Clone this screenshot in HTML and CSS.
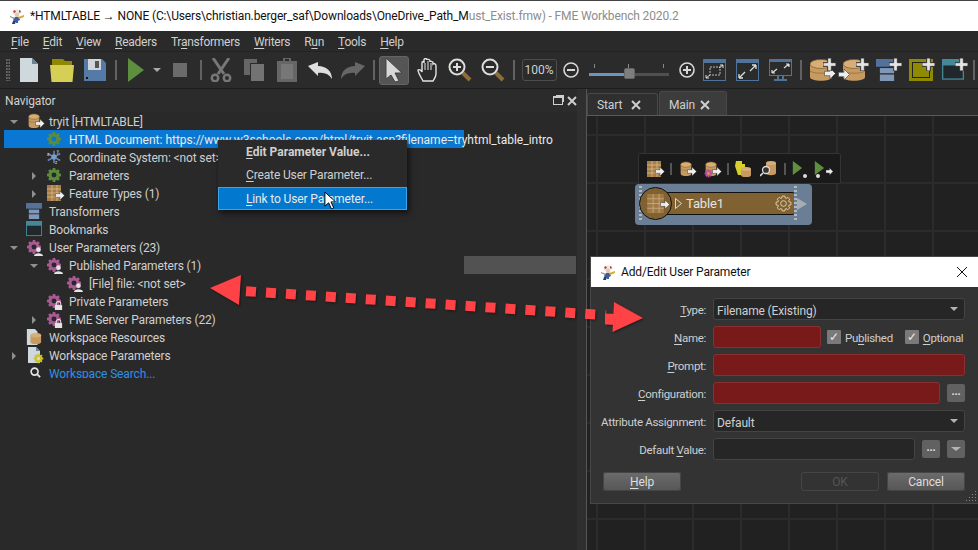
FILE: index.html
```html
<!DOCTYPE html>
<html lang="en">
<head>
<meta charset="utf-8">
<title>FME Workbench 2020.2</title>
<link rel="stylesheet" href="styles.css">
</head>
<body>
<svg class="defs" width="0" height="0">
  <defs>
    <symbol id="wizard" viewBox="0 0 16 16">
      <path d="M3 5 L8 1 L13 4 L11 6 L5 7Z" fill="#e8e8e8"/><path d="M4 3l2-1 1 2-2 1z" fill="#c83c2c"/><path d="M10 2l2 1-1 2-1-1z" fill="#c83c2c"/>
      <circle cx="8" cy="7" r="2.2" fill="#e8c8a8"/><path d="M6 9h4l1 3-2 1v2H7v-2l-2 1-1-2z" fill="#3c5ca8"/><path d="M1 8l5 2-1 1-4-2z" fill="#888"/><path d="M9 9l6-2 0 2-5 2z" fill="#d0b040"/><path d="M4 13l3 0-1 3H3z" fill="#2c3c70"/>
    </symbol>
    <symbol id="doc" viewBox="0 0 18 24"><path d="M0 0H12L18 6V24H0Z" fill="#cfd8dc"/><path d="M12 0L18 6H12Z" fill="#6d8592"/></symbol>
    <symbol id="folder" viewBox="0 0 24 23"><path d="M2 0H13L15 2H22V8H2Z" fill="#8e8900"/><path d="M0 6H24L22.500 23H1.500Z" fill="#d6cf55"/></symbol>
    <symbol id="save" viewBox="0 0 22 22"><path d="M0 0H18L22 4V22H0Z" fill="#567aa6"/><path d="M4 0H17V11H4Z" fill="#cfd5da"/><path d="M11 2H15V9H11Z" fill="#555"/><rect x="2" y="18" width="2" height="2" fill="#111"/></symbol>
    <symbol id="play" viewBox="0 0 16 24"><path d="M0 0L16 12L0 24Z" fill="#5d8f3e"/></symbol>
    <symbol id="scissors" viewBox="0 0 22 24"><path d="M3 0L14 16M19 0L8 16" stroke="#777" stroke-width="3" fill="none"/><circle cx="5" cy="20" r="3.200" fill="none" stroke="#777" stroke-width="2.500"/><circle cx="17" cy="20" r="3.200" fill="none" stroke="#777" stroke-width="2.500"/></symbol>
    <symbol id="copy" viewBox="0 0 20 22"><path d="M0 0H13V4H6V16H0Z" fill="#666"/><rect x="7" y="5" width="13" height="17" fill="#737373"/></symbol>
    <symbol id="paste" viewBox="0 0 20 24"><path d="M0 3H6V0H14V3H20V24H0Z" fill="#666"/><rect x="4" y="6" width="12" height="15" fill="#777"/><rect x="8" y="1" width="4" height="2" fill="#2b2b2b"/></symbol>
    <symbol id="undo" viewBox="0 0 24 17"><path d="M0 4L10 0V4C18 4 24 9 24 17C21 12 16 10 10 11V14Z" fill="currentColor"/></symbol>
    <symbol id="pointer" viewBox="0 0 20 26"><path d="M2 1L18 16H11L15 24L11 25L7 18L2 22Z" fill="#d8d8d8" stroke="#444"/></symbol>
    <symbol id="hand" viewBox="0 0 20 24"><path d="M6 23C4 19 1 15 1 12C2 11 4 12 5 14V5C5 3 7 3 7 5V2C7 0 10 0 10 2V2C10 1 13 1 13 3V4C13 3 16 3 16 5V6C17 5 19 6 19 8V16C19 19 17 21 16 23Z" fill="#2b2b2b" stroke="#e4e4e4" stroke-width="1.400"/><path d="M8 5V12M11 3V12M14 5V12" stroke="#e4e4e4"/></symbol>
    <symbol id="zoomin" viewBox="0 0 24 24"><path d="M15 15L22 22" stroke="#8f6d3a" stroke-width="4"/><circle cx="9" cy="9" r="7.500" fill="#2b2b2b" stroke="#ddd" stroke-width="2"/><path d="M5 9H13M9 5V13" stroke="#ddd" stroke-width="2"/></symbol>
    <symbol id="zoomout" viewBox="0 0 24 24"><path d="M15 15L22 22" stroke="#8f6d3a" stroke-width="4"/><circle cx="9" cy="9" r="7.500" fill="#2b2b2b" stroke="#ddd" stroke-width="2"/><path d="M5 9H13" stroke="#ddd" stroke-width="2"/></symbol>
    <symbol id="cminus" viewBox="0 0 16 16"><circle cx="8" cy="8" r="7" fill="none" stroke="#d8d8d8" stroke-width="1.600"/><path d="M4 8H12" stroke="#d8d8d8" stroke-width="2"/></symbol>
    <symbol id="cplus" viewBox="0 0 16 16"><circle cx="8" cy="8" r="7" fill="none" stroke="#d8d8d8" stroke-width="1.600"/><path d="M4 8H12M8 4V12" stroke="#d8d8d8" stroke-width="2"/></symbol>
    <symbol id="fitsel" viewBox="0 0 23 22"><rect x=".5" y=".5" width="22" height="21" fill="none" stroke="#50739c"/><rect width="23" height="4" fill="#50739c"/><rect x="7" y="8" width="10" height="8" fill="none" stroke="#bbb" stroke-dasharray="2 1"/><path d="M3 19L7 16M3 19V16M3 19H6M20 6L16 9M20 6V9M20 6H17" stroke="#ddd" fill="none"/></symbol>
    <symbol id="fitall" viewBox="0 0 23 22"><rect x=".5" y=".5" width="22" height="21" fill="none" stroke="#50739c"/><rect width="23" height="4" fill="#50739c"/><path d="M3 19L9 13M3 19V15M3 19H7M20 6L14 12M20 6V10M20 6H16" stroke="#ddd" stroke-width="1.300" fill="none"/></symbol>
    <symbol id="fitscreen" viewBox="0 0 23 22"><rect x=".5" y=".5" width="22" height="16" fill="none" stroke="#50739c"/><rect width="23" height="3" fill="#50739c"/><path d="M9 17V20M14 17V20M5 21H18" stroke="#50739c" stroke-width="2"/><path d="M3 14L8 10M3 14V11M3 14H6M20 5L15 9M20 5V8M20 5H17" stroke="#ddd" stroke-width="1.200" fill="none"/></symbol>
    <symbol id="plusmark" viewBox="0 0 14 14"><path d="M5 0H9V5H14V9H9V14H5V9H0V5H5Z" fill="#e4e4e4" stroke="#2b2b2b"/></symbol>
    <symbol id="drum" viewBox="0 0 14 18"><path d="M1 4V14C1 18 13 18 13 14V4Z" fill="#c79a5f"/><ellipse cx="7" cy="4" rx="6" ry="3" fill="#d8ae76" stroke="#7a5a30" stroke-width=".6"/><path d="M1 9C3 11 11 11 13 9" stroke="#8a6a3a" fill="none" stroke-width=".6"/></symbol>
    <symbol id="drumwide" viewBox="0 0 22 22"><path d="M0 5V18C0 23 22 23 22 18V5Z" fill="#c79a5f"/><ellipse cx="11" cy="5" rx="11" ry="4.500" fill="#d8ae76" stroke="#7a5a30" stroke-width=".7"/><path d="M0 12C4 15 18 15 22 12" stroke="#8a6a3a" fill="none" stroke-width=".7"/></symbol>
    <symbol id="rarrow" viewBox="0 0 10 10"><path d="M0 3H5V0L10 5L5 10V7H0Z" fill="#eee" stroke="#333" stroke-width=".5"/></symbol>
    <symbol id="gear" viewBox="0 0 18 18"><path transform="translate(9 9)" fill="currentColor" fill-rule="evenodd" d="M-1.85 -5.71L-1.39 -7.88L1.39 -7.88L1.85 -5.71L2.73 -5.35L4.59 -6.55L6.55 -4.59L5.35 -2.73L5.71 -1.85L7.88 -1.39L7.88 1.39L5.71 1.85L5.35 2.73L6.55 4.59L4.59 6.55L2.73 5.35L1.85 5.71L1.39 7.88L-1.39 7.88L-1.85 5.71L-2.73 5.35L-4.59 6.55L-6.55 4.59L-5.35 2.73L-5.71 1.85L-7.88 1.39L-7.88 -1.39L-5.71 -1.85L-5.35 -2.73L-6.55 -4.59L-4.59 -6.55L-2.73 -5.35ZM2.800 0A2.800 2.800 0 1 0 -2.800 0A2.800 2.800 0 1 0 2.800 0Z"/></symbol>
    <symbol id="gearline" viewBox="0 0 18 18"><g transform="translate(9 9)" fill="none" stroke="currentColor"><path d="M-1.85 -5.71L-1.39 -7.88L1.39 -7.88L1.85 -5.71L2.73 -5.35L4.59 -6.55L6.55 -4.59L5.35 -2.73L5.71 -1.85L7.88 -1.39L7.88 1.39L5.71 1.85L5.35 2.73L6.55 4.59L4.59 6.55L2.73 5.35L1.85 5.71L1.39 7.88L-1.39 7.88L-1.85 5.71L-2.73 5.35L-4.59 6.55L-6.55 4.59L-5.35 2.73L-5.71 1.85L-7.88 1.39L-7.88 -1.39L-5.71 -1.85L-5.35 -2.73L-6.55 -4.59L-4.59 -6.55L-2.73 -5.35Z"/><circle r="3"/></g></symbol>
    <symbol id="user" viewBox="0 0 10 10"><circle cx="5" cy="3" r="2.600" fill="#e4e4e4"/><path d="M0 10C0 6 10 6 10 10Z" fill="#e4e4e4"/></symbol>
    <symbol id="lock" viewBox="0 0 10 10"><path d="M2.500 5V3a2.500 2.500 0 0 1 5 0V5" fill="none" stroke="#ddd" stroke-width="1.200"/><rect x="1" y="4.500" width="8" height="5.500" fill="#e4e4e4"/></symbol>
    <symbol id="grid" viewBox="0 0 14 16"><rect width="14" height="16" fill="#a67e4a"/><path d="M0 4H14M0 8H14M0 12H14M5 0V16M10 0V16" stroke="#e0c090" stroke-width=".7"/></symbol>
    <symbol id="x" viewBox="0 0 10 10"><path d="M1 1L9 9M9 1L1 9" stroke="#cfcfcf" stroke-width="2" fill="none"/></symbol>
    <symbol id="coord" viewBox="0 0 18 18"><path d="M9 2V16M2 13L16 5M2 5L16 13" stroke="#5f84b4" stroke-width="1.800"/><circle cx="9" cy="9" r="3" fill="#7f9cc4"/><text x="1" y="8" font-size="5" fill="#ddd" font-family="Roboto">x</text><text x="12" y="5" font-size="5" fill="#ddd" font-family="Roboto">y</text><text x="10" y="17" font-size="5" fill="#ddd" font-family="Roboto">z</text></symbol>
    <symbol id="stack" viewBox="0 0 17 17"><rect width="17" height="6" fill="#54719b"/><rect x="3" y="7" width="11" height="4" fill="#7f97b8"/><rect x="3" y="12" width="11" height="5" fill="#7f97b8"/></symbol>
    <symbol id="book" viewBox="0 0 17 17"><rect x=".5" y=".5" width="16" height="15" fill="#20282c" stroke="#43899a"/><rect width="17" height="5" fill="#43899a"/></symbol>
    <symbol id="docdrum" viewBox="0 0 18 18"><path d="M1 0H10L13 3V18H1Z" fill="#cfd8dc"/><path d="M5 7V15C5 18 17 18 17 15V7Z" fill="#c79a5f"/><ellipse cx="11" cy="7" rx="6" ry="2.500" fill="#d8ae76"/></symbol>
    <symbol id="folderdrum" viewBox="0 0 16 16"><path d="M1 0H7V3H10V14H3L0 5Z" fill="#d8cf2c"/><path d="M6 8V14C6 17 16 17 16 14V8Z" fill="#c79a5f"/><ellipse cx="11" cy="8" rx="5" ry="2" fill="#d8ae76"/></symbol>
    <symbol id="searchdrum" viewBox="0 0 16 16"><path d="M6 2V12C6 15 16 15 16 12V2Z" fill="#c79a5f"/><ellipse cx="11" cy="2" rx="5" ry="2" fill="#d8ae76"/><circle cx="6" cy="9" r="3.500" fill="#333" stroke="#ddd" stroke-width="1.300"/><path d="M3 12L0 15" stroke="#ddd" stroke-width="1.600"/></symbol>
    <symbol id="mag" viewBox="0 0 12 12"><circle cx="5" cy="5" r="3.800" fill="none" stroke="#e4e4e4" stroke-width="1.800"/><path d="M8 8L11 11" stroke="#e4e4e4" stroke-width="2"/></symbol>
    <symbol id="caretout" viewBox="0 0 7 11"><path d="M.5 .5L6.500 5.500L.5 10.500Z" fill="none" stroke="#d8d8d8"/></symbol>
    <symbol id="cursor" viewBox="0 0 14 20"><path d="M1 1V16L5 12.500L8 19L10.500 18L7.500 11.500H12.500Z" fill="#fff" stroke="#000"/></symbol>
  </defs>
</svg>

<div class="app">
  <header class="titlebar">
    <svg class="title-icon"><use href="#wizard"/></svg>
    <span class="title-text">*HTMLTABLE → NONE (C:\Users\christian.berger_saf\Downloads\OneDrive_Path_M<span class="faded">ust_Exist.fmw) - FME Workbench 2020.2</span></span>
  </header>

  <nav class="menubar">
    <span><u>F</u>ile</span><span><u>E</u>dit</span><span><u>V</u>iew</span><span><u>R</u>eaders</span><span>Tr<u>a</u>nsformers</span><span><u>W</u>riters</span><span>R<u>u</u>n</span><span><u>T</u>ools</span><span><u>H</u>elp</span>
  </nav>

  <div class="toolbar">
    <span class="grip"></span>
    <span class="tool"><svg class="i18x24"><use href="#doc"/></svg></span>
    <span class="tool"><svg class="i24x23"><use href="#folder"/></svg></span>
    <span class="tool"><svg class="i22"><use href="#save"/></svg></span>
    <span class="sep"></span>
    <span class="tool"><svg class="i16x24"><use href="#play"/></svg></span>
    <span class="mini-drop"></span>
    <span class="tool"><span class="stop"></span></span>
    <span class="sep"></span>
    <span class="tool"><svg class="i22x24"><use href="#scissors"/></svg></span>
    <span class="tool"><svg class="i20x22"><use href="#copy"/></svg></span>
    <span class="tool"><svg class="i20x24"><use href="#paste"/></svg></span>
    <span class="tool light"><svg class="i24x17"><use href="#undo"/></svg></span>
    <span class="tool dim"><svg class="i24x17 flip"><use href="#undo"/></svg></span>
    <span class="sep"></span>
    <span class="tool"><span class="pressed"><svg class="i20x26"><use href="#pointer"/></svg></span></span>
    <span class="tool"><svg class="i20x24"><use href="#hand"/></svg></span>
    <span class="tool"><svg class="i24"><use href="#zoomin"/></svg></span>
    <span class="tool"><svg class="i24"><use href="#zoomout"/></svg></span>
    <span class="sep"></span>
    <span class="zoombox">100%</span>
    <span class="tool-sm"><svg class="i16"><use href="#cminus"/></svg></span>
    <span class="slider"><span class="ticks"><i></i><i></i><i></i></span><span class="track"><span class="fill"></span><span class="thumb"></span></span></span>
    <span class="tool-sm"><svg class="i16"><use href="#cplus"/></svg></span>
    <span class="tool tool-after"><svg class="i23x22"><use href="#fitsel"/></svg></span>
    <span class="tool"><svg class="i23x22"><use href="#fitall"/></svg></span>
    <span class="tool"><svg class="i23x22"><use href="#fitscreen"/></svg></span>
    <span class="sep"></span>
    <span class="tool"><span class="addicon"><svg class="add-base"><use href="#drumwide"/></svg><svg class="add-arrow-r"><use href="#rarrow"/></svg><svg class="add-plus"><use href="#plusmark"/></svg></span></span>
    <span class="tool"><span class="addicon"><svg class="add-base"><use href="#drumwide"/></svg><svg class="add-arrow-l"><use href="#rarrow"/></svg><svg class="add-plus"><use href="#plusmark"/></svg></span></span>
    <span class="tool"><span class="addicon"><svg class="add-base"><use href="#stack"/></svg><svg class="add-plus"><use href="#plusmark"/></svg></span></span>
    <span class="tool"><span class="addicon"><span class="olive"></span><svg class="add-plus"><use href="#plusmark"/></svg></span></span>
    <span class="tool"><span class="addicon"><svg class="add-base"><use href="#book"/></svg><svg class="add-plus"><use href="#plusmark"/></svg></span></span>
    <span class="sep"></span>
  </div>

  <main class="workspace">
    <section class="navigator">
      <div class="nav-head">
        <span>Navigator</span>
        <span class="nav-btns"><span class="float-btn"></span><svg class="close"><use href="#x"/></svg></span>
      </div>
      <div class="tree">
        <div class="row"><span class="tw down"></span><span class="ico"><svg class="full"><use href="#drum"/></svg><svg class="ov-arrow"><use href="#rarrow"/></svg></span><span>tryit [HTMLTABLE]</span></div>
        <div class="row selected d1"><span class="tw"></span><span class="ico green"><svg class="full"><use href="#gear"/></svg></span><span>HTML Document: https://www.w3schools.com/html/tryit.asp?filename=tryhtml_table_intro</span></div>
        <div class="row d1"><span class="tw"></span><span class="ico"><svg class="full"><use href="#coord"/></svg></span><span>Coordinate System: &lt;not set&gt;</span></div>
        <div class="row d1"><span class="tw right"></span><span class="ico green"><svg class="full"><use href="#gear"/></svg></span><span>Parameters</span></div>
        <div class="row d1"><span class="tw right"></span><span class="ico"><svg class="full"><use href="#grid"/></svg><svg class="ov-arrow"><use href="#rarrow"/></svg></span><span>Feature Types (1)</span></div>
        <div class="row"><span class="tw"></span><span class="ico"><svg class="full"><use href="#stack"/></svg></span><span>Transformers</span></div>
        <div class="row"><span class="tw"></span><span class="ico"><svg class="full"><use href="#book"/></svg></span><span>Bookmarks</span></div>
        <div class="row"><span class="tw down"></span><span class="ico pink"><svg class="full"><use href="#gear"/></svg><svg class="ov-badge"><use href="#user"/></svg></span><span>User Parameters (23)</span></div>
        <div class="row d1"><span class="tw down"></span><span class="ico pink"><svg class="full"><use href="#gear"/></svg><svg class="ov-badge"><use href="#user"/></svg></span><span>Published Parameters (1)</span></div>
        <div class="row d2"><span class="tw"></span><span class="ico pink"><svg class="full"><use href="#gear"/></svg><svg class="ov-badge"><use href="#user"/></svg></span><span>[File] file: &lt;not set&gt;</span></div>
        <div class="row d1"><span class="tw"></span><span class="ico pink"><svg class="full"><use href="#gear"/></svg><svg class="ov-badge"><use href="#lock"/></svg></span><span>Private Parameters</span></div>
        <div class="row d1"><span class="tw right"></span><span class="ico pink"><svg class="full"><use href="#gear"/></svg><svg class="ov-badge"><use href="#lock"/></svg></span><span>FME Server Parameters (22)</span></div>
        <div class="row"><span class="tw"></span><span class="ico"><svg class="full"><use href="#docdrum"/></svg></span><span>Workspace Resources</span></div>
        <div class="row"><span class="tw right"></span><span class="ico"><svg class="full"><use href="#doc"/></svg><svg class="ov-gear"><use href="#gear"/></svg></span><span>Workspace Parameters</span></div>
        <div class="row link"><span class="tw"></span><span class="ico"><svg class="mag"><use href="#mag"/></svg></span><span>Workspace Search...</span></div>
      </div>
      <div class="ghost-band"></div>
    </section>

    <div class="splitter"></div>

    <section class="editor">
      <div class="tabbar">
        <div class="tab">Start<svg class="close"><use href="#x"/></svg></div>
        <div class="tab active">Main<svg class="close"><use href="#x"/></svg></div>
      </div>
      <div class="canvas">
        <div class="mini-toolbar">
          <span class="mt"><svg class="full"><use href="#grid"/></svg><svg class="mt-arrow"><use href="#rarrow"/></svg></span>
          <span class="mt-sep"></span>
          <span class="mt"><svg class="full"><use href="#drum"/></svg><svg class="mt-arrow"><use href="#rarrow"/></svg></span>
          <span class="mt pink"><svg class="full"><use href="#drum"/></svg><svg class="mt-gear"><use href="#gear"/></svg><svg class="mt-arrow"><use href="#rarrow"/></svg></span>
          <span class="mt-sep"></span>
          <span class="mt"><svg class="full"><use href="#folderdrum"/></svg></span>
          <span class="mt"><svg class="full"><use href="#searchdrum"/></svg></span>
          <span class="mt-sep"></span>
          <span class="mt"><svg class="mt-play"><use href="#play"/></svg><i class="dot dot-r"></i></span>
          <span class="mt mt-last"><svg class="mt-play"><use href="#play"/></svg><i class="dot dot-l"></i><svg class="mt-arrow small"><use href="#rarrow"/></svg></span>
        </div>
        <div class="node">
          <span class="strip strip-l"></span>
          <span class="node-bar">
            <svg class="node-caret"><use href="#caretout"/></svg><span class="node-name">Table1</span>
            <svg class="node-gear"><use href="#gearline"/></svg>
          </span>
          <span class="node-circle"><svg class="node-grid"><use href="#grid"/></svg><svg class="node-arrow"><use href="#rarrow"/></svg></span>
          <span class="strip strip-r"></span>
          <span class="port"></span>
        </div>
      </div>
    </section>
  </main>
</div>

<div class="ctx">
  <div class="ctx-item strong"><u>E</u>dit Parameter Value...</div>
  <div class="ctx-item"><u>C</u>reate User Parameter...</div>
  <div class="ctx-item hot"><u>L</u>ink to User Parameter...</div>
</div>

<div class="dialog">
  <div class="dlg-title">
    <svg class="title-icon"><use href="#wizard"/></svg>
    <span>Add/Edit User Parameter</span>
    <svg class="dlg-x" viewBox="0 0 10 10"><path d="M0 0L10 10M10 0L0 10" stroke="#111" fill="none"/></svg>
  </div>
  <div class="dlg-body">
    <div class="form">
      <label><u>T</u>ype:</label>
      <div class="field select">Filename (Existing)<span class="caret"></span></div>
      <label><u>N</u>ame:</label>
      <div class="line">
        <div class="field err name"></div>
        <span class="check"><i>✓</i></span><span class="cklabel">Pu<u>b</u>lished</span>
        <span class="check ck2"><i>✓</i></span><span class="cklabel"><u>O</u>ptional</span>
      </div>
      <label><u>P</u>rompt:</label>
      <div class="field err"></div>
      <label><u>C</u>onfiguration:</label>
      <div class="line"><div class="field err grow"></div><span class="sq">...</span></div>
      <label>Attribute Assignment:</label>
      <div class="field select">Default<span class="caret"></span></div>
      <label>Default <u>V</u>alue:</label>
      <div class="line"><div class="field grow"></div><span class="sq">...</span><span class="sq"><span class="caret in"></span></span></div>
    </div>
    <div class="actions">
      <span class="btn"><u>H</u>elp</span>
      <span class="spacer"></span>
      <span class="btn disabled">OK</span>
      <span class="btn">Cancel</span>
    </div>
    <span class="resize"></span>
  </div>
</div>

<svg class="annot" viewBox="0 0 978 550">
  <g class="annot-shadow">
    <path d="M210 288L241 275L239 305Z" fill="#ff4245"/>
    <path d="M246 291.200L606 315.200" stroke="#ff4245" stroke-width="10" stroke-dasharray="10 10" fill="none"/>
    <path d="M643 318L614 302L612.500 332Z" fill="#ff4245"/>
    <path d="M605 313.500L616 314V325L605 324.500Z" fill="#ff4245"/>
  </g>
</svg>
<svg class="cursor"><use href="#cursor"/></svg>
</body>
</html>
```

FILE: styles.css
```css
* { box-sizing: border-box; }
html, body { margin: 0; padding: 0; }
body {
  position: relative;
  width: 978px;
  height: 550px;
  overflow: hidden;
  background: #2a2a2a;
  color: #cfcfcf;
  font: 12px/18px Roboto, "Liberation Sans", sans-serif;
  letter-spacing: -.14px;
}
.defs { position: absolute; }
svg { display: block; flex: none; overflow: visible; }
u { text-underline-offset: 2px; text-decoration-thickness: 1px; }

.app { display: flex; flex-direction: column; height: 550px; border-top: 1px solid #444; }

/* title */
.titlebar { flex: 0 0 30px; display: flex; align-items: center; gap: 5px; padding-left: 9px; background: #fff; color: #111; font-size: 12px; white-space: nowrap; }
.title-icon { width: 16px; height: 16px; }
.faded { color: #8d8d8d; }

/* menu */
.menubar { flex: 0 0 20px; display: flex; gap: 14px; padding: 1px 0 0 11px; align-items: center; background: #2a2a2a; letter-spacing: -.26px; }

/* toolbar */
.toolbar { flex: 0 0 38px; display: flex; align-items: center; padding-left: 6px; background: #2b2b2b; border-top: 1px solid #232323; border-bottom: 1px solid #1d1d1d; }
.grip { width: 5px; height: 22px; margin-right: 2.500px; background: radial-gradient(circle at 1px 1px, #666 1px, transparent 1.200px) 0 0 / 2.500px 3px; }
.tool { flex: 0 0 33px; height: 36px; display: flex; align-items: center; justify-content: center; }
.tool-sm { flex: 0 0 18px; display: flex; justify-content: center; }
.tool-after { margin-left: 2.500px; }
.sep { flex: 0 0 8px; display: flex; justify-content: center; height: 20px; }
.sep::before { content: ""; width: 2px; height: 20px; background: #626262; }
.light { color: #dedede; }
.dim { color: #666; }
.flip { transform: scaleX(-1); }
.i18x24 { width: 18px; height: 24px; }
.i24x23 { width: 24px; height: 23px; }
.i22 { width: 22px; height: 22px; }
.i16x24 { width: 16px; height: 24px; }
.i22x24 { width: 22px; height: 24px; }
.i20x22 { width: 20px; height: 22px; }
.i20x24 { width: 20px; height: 24px; }
.i24x17 { width: 24px; height: 17px; }
.i20x26 { width: 20px; height: 26px; }
.i24 { width: 24px; height: 24px; }
.i16 { width: 16px; height: 16px; }
.i23x22 { width: 23px; height: 22px; }
.mini-drop { flex: 0 0 8px; width: 0; height: 0; margin-right: 3px; border-style: solid; border-width: 4px 4px 0; border-color: #aaa transparent transparent; }
.stop { width: 14px; height: 14px; background: #6b6b6b; }
.pressed { width: 30px; height: 29px; display: flex; align-items: center; justify-content: center; background: #555; border: 1px solid #646464; border-radius: 3px; }
.zoombox { flex: 0 0 35px; height: 22px; margin: 0 5px 0 4px; border: 1px solid #4d4d4d; border-radius: 3px; text-align: center; line-height: 20px; letter-spacing: 0; }
.slider { flex: 0 0 80px; margin: 0 9px; display: flex; flex-direction: column; gap: 5px; }
.ticks { display: flex; justify-content: space-between; padding: 0 5px; height: 4px; }
.ticks i { width: 1px; height: 4px; background: #888; }
.track { position: relative; display: block; height: 3px; background: #505050; }
.fill { display: block; width: 36px; height: 3px; background: #6f93bf; }
.thumb { position: absolute; left: 35px; top: -5px; width: 11px; height: 11px; background: #7e7e7e; border: 1px solid #666; border-radius: 2px; }
.addicon { position: relative; width: 24px; height: 22px; display: block; }
.add-base { width: 22px; height: 22px; }
.add-plus { position: absolute; right: -2px; top: -1px; width: 13px; height: 13px; }
.add-arrow-r { position: absolute; right: -2px; bottom: 2px; width: 12px; height: 11px; }
.add-arrow-l { position: absolute; left: -5px; bottom: 1px; width: 12px; height: 11px; }
.olive { display: block; width: 24px; height: 22px; background: #8f8a00; box-shadow: inset 0 0 0 3px #8f8a00, inset 0 0 0 4px #222; }

/* workspace */
.workspace { flex: 1; display: flex; min-height: 0; }
.navigator { position: relative; flex: 0 0 577px; background: #292929; }
.nav-head { height: 23px; display: flex; justify-content: space-between; align-items: center; padding: 1px 0 1px 5px; background: #2b2b2b; }
.nav-btns { display: flex; align-items: center; gap: 4px; }
.float-btn { width: 10px; height: 9px; border: 1px solid #cfcfcf; border-top-width: 2px; box-shadow: 2px -2px 0 -1px #cfcfcf; }
.close { width: 10px; height: 10px; }
.tree { height: 266px; overflow: hidden; padding-left: 4px; white-space: nowrap; }
.row { display: flex; align-items: center; height: 18px; padding-top: 2px; }
.d1 { padding-left: 20px; }
.d2 { padding-left: 40px; }
.selected { background: linear-gradient(#0a78d2, #0a78d2) 0 0 / 460px 18px no-repeat; color: #eaeaea; letter-spacing: 0; }
.tw { flex: 0 0 22px; display: flex; align-items: center; padding-left: 6px; }
.tw.down::before { content: ""; border-style: solid; border-width: 4px 4px 0; border-color: #8f8f8f transparent transparent; }
.tw.right::before { content: ""; margin-left: 2px; border-style: solid; border-width: 4px 0 4px 4px; border-color: transparent transparent transparent #8f8f8f; }
.ico { position: relative; flex: 0 0 18px; height: 18px; margin-right: 5px; }
.full { width: 16px; height: 16px; margin-top: 0; }
.green { color: #5b8c3c; }
.pink { color: #a85a92; }
.ov-arrow { position: absolute; right: -1px; bottom: 3px; width: 10px; height: 9px; }
.ov-badge { position: absolute; right: 1px; bottom: 1px; width: 9px; height: 9px; }
.ov-gear { position: absolute; right: 0; bottom: 1px; width: 11px; height: 11px; color: #cfc31e; }
.mag { width: 11px; height: 11px; margin: 2px 0 0 4px; }
.link { color: #2f8fe8; }
.ghost-band { position: absolute; left: 464px; top: 167px; width: 112px; height: 18px; background: #525252; }
.splitter { flex: 0 0 10px; background: #2f2f2f; border-right: 1px solid #565656; }

/* editor */
.editor { flex: 1; display: flex; flex-direction: column; min-width: 0; }
.tabbar { flex: 0 0 27px; display: flex; align-items: flex-end; gap: 1px; background: #2c2c2c; border-bottom: 1px solid #5a5a5a; }
.tab { display: flex; align-items: center; justify-content: space-between; width: 71px; height: 22px; padding: 0 16px 0 9px; background: #2f2f2f; border: 1px solid #484848; border-bottom: 0; border-radius: 3px 3px 0 0; }
.tab.active { width: 68px; height: 24px; padding-top: 2px; background: #3c3c3c; }
.canvas { position: relative; flex: 1; background-color: #212121; background-image: linear-gradient(#2b2b2b 2px, transparent 2px), linear-gradient(90deg, #2b2b2b 2px, transparent 2px); background-size: 48px 48px; background-position: 9px 18px; }
.mini-toolbar { position: absolute; left: 51px; top: 37px; width: 203px; height: 31px; display: flex; align-items: center; padding-left: 7px; background: #1a1a1a; border: 1px solid #333; border-radius: 2px; }
.mt { position: relative; flex: 0 0 16px; height: 16px; margin-right: 9px; }
.mt-last { margin-left: -3px; }
.mt-sep { flex: 0 0 2px; height: 12px; margin: 0 6px 0 -1px; background: #555; }
.mt-arrow { position: absolute; right: -3px; bottom: 1px; width: 10px; height: 9px; }
.mt-arrow.small { width: 7px; height: 7px; bottom: 2px; }
.mt-gear { position: absolute; left: 1px; bottom: -1px; width: 9px; height: 9px; color: #c04aa0; }
.mt-play { width: 11px; height: 14px; }
.dot { position: absolute; width: 4px; height: 4px; border-radius: 50%; background: #ddd; }
.dot-r { right: 1px; bottom: -1px; }
.dot-l { left: 2px; bottom: -1px; }

.node { position: absolute; left: 48px; top: 68px; width: 177px; height: 41px; background: #6a7f96; border-radius: 4px; }
.node-bar { position: absolute; left: 22px; top: 8px; width: 140px; height: 23px; display: flex; align-items: center; padding-left: 17px; background: #806232; border: 1px solid #0f0f0f; border-radius: 5px; color: #e4e4e4; font-size: 13px; }
.node-caret { width: 7px; height: 11px; margin-right: 4px; }
.node-gear { position: absolute; right: 4px; top: 2px; width: 17px; height: 17px; color: #e0d0b0; }
.node-circle { position: absolute; left: 4px; top: 3px; width: 33px; height: 33px; border-radius: 50%; background: #806232; border: 1px solid #0f0f0f; }
.node-grid { position: absolute; left: 7px; top: 6px; width: 17px; height: 19px; opacity: .8; }
.node-arrow { position: absolute; left: 20px; top: 12px; width: 10px; height: 9px; }
.strip { position: absolute; top: 2px; width: 3px; height: 36px; background: repeating-linear-gradient(#b0b8c0 0 2px, #6a7f96 2px 4px); }
.strip-l { left: 4px; }
.strip-r { left: 159px; }
.port { position: absolute; left: 162px; top: 14px; width: 0; height: 0; border-style: solid; border-width: 6px 0 6px 10px; border-color: transparent transparent transparent #a8adb4; }

/* context menu */
.ctx { position: absolute; left: 218px; top: 140px; width: 189px; height: 70px; padding-top: 1px; background: #2a2a2a; box-shadow: 2px 3px 6px rgba(0,0,0,.6); }
.ctx-item { height: 23px; padding-left: 28px; line-height: 22px; }
.strong { font-weight: 700; letter-spacing: 0; }
.hot { background: #0278cf; border: 1px solid #3aa4f0; padding-left: 27px; color: #eaeaea; }
.cursor { position: absolute; left: 324px; top: 191px; width: 13px; height: 19px; }

/* dialog */
.dialog { position: absolute; left: 591px; top: 257px; width: 387px; height: 246px; display: flex; flex-direction: column; background: #333; box-shadow: 0 0 0 1px #484848; }
.dlg-title { flex: 0 0 30px; display: flex; align-items: center; gap: 5px; padding-left: 9px; background: #fff; color: #111; position: relative; }
.dlg-x { position: absolute; right: 11px; top: 10px; width: 10px; height: 10px; }
.dlg-body { position: relative; flex: 1; padding: 11px 13px 0 0; }
.form { display: grid; grid-template-columns: 115px minmax(0, 1fr); column-gap: 7px; row-gap: 6px; }
.form label { text-align: right; font-size: 11.500px; line-height: 25px; height: 22px; white-space: nowrap; letter-spacing: -.3px; }
.field { height: 22px; padding-left: 3px; line-height: 24px; background: #262626; border: 1px solid #444; border-radius: 3px; position: relative; }
.err { background: #781a1a; border-color: #8a3030; }
.name { flex: 0 0 108px; }
.grow { flex: 1; }
.line { display: flex; align-items: center; }
.check { flex: 0 0 14px; height: 14px; margin-left: 6px; background: #7a7a7a; border-radius: 1px; color: #e8e8e8; line-height: 14px; text-align: center; }
.check i { font-style: normal; }
.cklabel { margin: 2px 0 0 4px; font-size: 11.500px; white-space: nowrap; letter-spacing: -.3px; }
.ck2 { margin-left: 12px; }
.sq { flex: 0 0 18px; height: 18px; margin-left: 7px; background: #616161; border-radius: 2px; text-align: center; line-height: 15px; color: #e4e4e4; font-size: 11px; font-weight: 700; position: relative; }
.caret { position: absolute; right: 6px; top: 8px; border-style: solid; border-width: 4px 4px 0; border-color: #b4b4b4 transparent transparent; }
.caret.in { right: 4px; top: 7px; border-width: 4px 5px 0; }
.actions { display: flex; gap: 8px; margin: 12px 0 0 12px; }
.spacer { flex: 1; }
.btn { width: 78px; height: 19px; background: linear-gradient(#6c6c6c, #565656); border-radius: 3px; text-align: center; line-height: 20px; color: #dedede; box-shadow: 0 0 0 1px #454545 inset; }
.disabled { background: #333; color: #555; }
.resize { position: absolute; right: 2px; bottom: 2px; width: 11px; height: 11px; background: radial-gradient(circle, #888 .8px, transparent 1px) 0 0 / 3px 3px; clip-path: polygon(100% 0, 100% 100%, 0 100%); }

/* annotation */
.annot { position: absolute; left: 0; top: 0; width: 978px; height: 550px; pointer-events: none; }
.annot-shadow { filter: drop-shadow(1px 1px 1px rgba(0,0,0,.45)); }
```
